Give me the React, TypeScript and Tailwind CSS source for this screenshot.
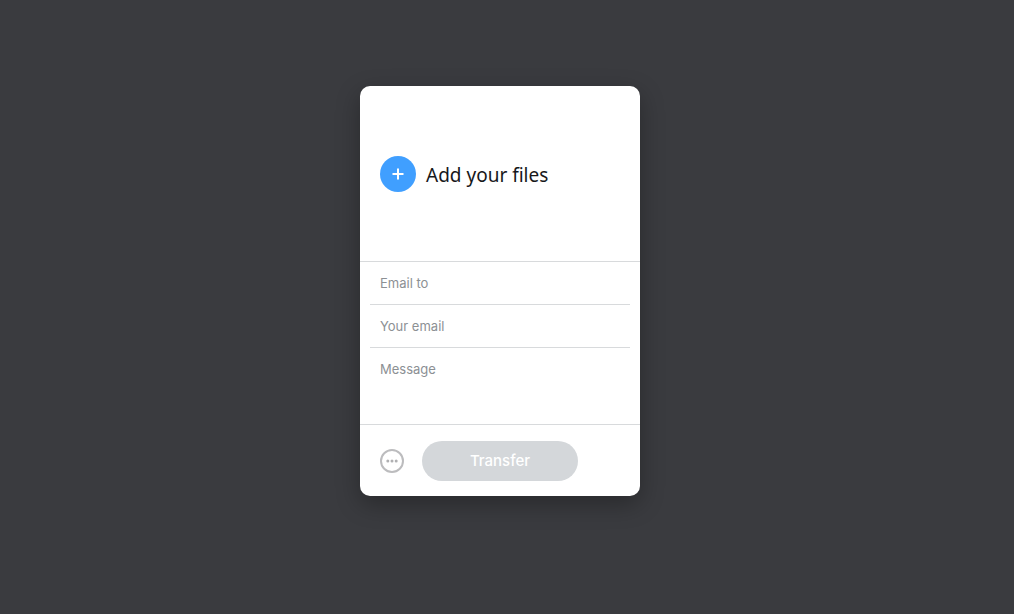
const fields = ["Email to", "Your email"];

const App = () => {
  return (
    <div className="flex h-[614px] w-full items-center justify-center overflow-hidden bg-[#3a3b3f] pr-[14px] pb-[32px] font-['Inter',sans-serif]">
      <div className="flex h-[410px] w-[280px] flex-col rounded-[10px] bg-white shadow-[0_8px_24px_rgba(0,0,0,0.3)]">
        {/* Add files */}
        <div className="flex h-[176px] items-center gap-2.5 border-b border-[#d8dadc] px-5">
          <div className="flex h-9 w-9 items-center justify-center rounded-full bg-[#409fff]">
            <svg width="14" height="14" viewBox="0 0 14 14" fill="none" stroke="white" strokeWidth="2">
              <path d="M7 1.5v11M1.5 7h11" />
            </svg>
          </div>
          <span className="pt-1 font-['Noto_Sans',sans-serif] text-[19px] text-[#17181a]">Add your files</span>
        </div>

        {/* Fields */}
        <div className="flex flex-col px-2.5">
          {fields.map((label) => (
            <div key={label} className="flex h-[43px] items-center border-b border-[#d8dadc] px-2.5 pt-px text-[13px] text-[#8c9094]">
              {label}
            </div>
          ))}
          <div className="h-[76px] px-2.5 pt-[13px] text-[13px] leading-[17px] text-[#8c9094]">Message</div>
        </div>

        {/* Footer */}
        <div className="flex flex-1 items-center gap-[18px] border-t border-[#d8dadc] px-5">
          <svg width="24" height="24" viewBox="0 0 24 24" fill="none">
            <circle cx="12" cy="12" r="11" stroke="#bcbcbe" strokeWidth="2" />
            <circle cx="7.8" cy="12" r="1.5" fill="#b0b0b2" />
            <circle cx="12" cy="12" r="1.5" fill="#b0b0b2" />
            <circle cx="16.2" cy="12" r="1.5" fill="#b0b0b2" />
          </svg>
          <button className="h-10 w-[156px] rounded-full bg-[#d4d7da] pt-px text-[15px] font-medium text-white">Transfer</button>
        </div>
      </div>
    </div>
  );
};

export default App;
